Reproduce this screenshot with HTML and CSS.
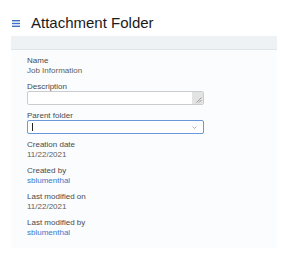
FILE: index.html
```html
<!DOCTYPE html>
<html>
<head>
<meta charset="utf-8">
<link rel="stylesheet" href="styles.css">
</head>
<body>
<header class="header">
  <svg class="menu" width="8" height="7" viewBox="0 0 8 7"><rect x="0" y="0" width="8" height="1.4" fill="#3d73c6"/><rect x="0" y="2.8" width="8" height="1.4" fill="#3d73c6"/><rect x="0" y="5.6" width="8" height="1.4" fill="#3d73c6"/></svg>
  <h1 class="title">Attachment Folder</h1>
</header>
<section class="panel">
  <div class="band"></div>
  <div class="fields">
    <div class="field">
      <div class="label">Name</div>
      <div class="value">Job Information</div>
    </div>
    <div class="field">
      <div class="label">Description</div>
      <div class="textarea"><div class="grip"><svg width="7" height="7" viewBox="0 0 7 7"><path d="M6.5 1.5 L1.5 6.5 M6.5 4 L4 6.5" stroke="#8a8a8a" stroke-width="0.8" fill="none"/></svg></div></div>
    </div>
    <div class="field">
      <div class="label">Parent folder</div>
      <div class="select"><span class="caret"></span><svg class="chev" width="5" height="3" viewBox="0 0 5 3"><path d="M0.5 0.5 L2.5 2.5 L4.5 0.5" stroke="#9a9a9a" stroke-width="0.8" fill="none"/></svg></div>
    </div>
    <div class="field">
      <div class="label">Creation date</div>
      <div class="value">11/22/2021</div>
    </div>
    <div class="field">
      <div class="label">Created by</div>
      <div class="value link">sblumenthal</div>
    </div>
    <div class="field">
      <div class="label">Last modified on</div>
      <div class="value">11/22/2021</div>
    </div>
    <div class="field">
      <div class="label">Last modified by</div>
      <div class="value link">sblumenthal</div>
    </div>
  </div>
</section>
</body>
</html>
```
FILE: styles.css
```css
html, body {
  margin: 0;
  padding: 0;
  background: #ffffff;
  font-family: "Liberation Sans", Arial, sans-serif;
}
.header {
  display: flex;
  align-items: flex-start;
  height: 36px;
  padding: 13px 0 0 12px;
  box-sizing: border-box;
}
.menu {
  margin-top: 7px;
  flex: none;
}
.title {
  margin: 0 0 0 11px;
  font-size: 15px;
  font-weight: normal;
  line-height: 20px;
  color: #1a1a1a;
}
.panel {
  margin: 0 13px 0 11px;
  background: #fbfcfd;
  padding-bottom: 10px;
}
.band {
  height: 13px;
  background: #eff2f4;
  border-bottom: 1px solid #dfe4e8;
}
.fields {
  display: flex;
  flex-direction: column;
  gap: 6px;
  padding: 6px 0 0 16px;
}
.field {
  display: flex;
  flex-direction: column;
}
.label {
  font-size: 8px;
  line-height: 10px;
  color: #4a4a4a;
}
.value {
  font-size: 8px;
  line-height: 10px;
  color: #5e5e5e;
}
.link {
  color: #3a78c9;
}
.textarea {
  margin-top: -1px;
  width: 177px;
  height: 14px;
  box-sizing: border-box;
  border: 1px solid #c9cdd1;
  border-radius: 2px;
  background: #ffffff;
  display: flex;
  justify-content: flex-end;
  overflow: hidden;
}
.grip {
  width: 11px;
  background: #e3e3e3;
  display: flex;
  align-items: flex-end;
  justify-content: flex-end;
}
.grip svg {
  display: block;
  margin: 0 1px 1px 0;
}
.select {
  margin-top: -1px;
  width: 177px;
  height: 14px;
  box-sizing: border-box;
  border: 1px solid #6a98da;
  border-radius: 2px;
  background: #ffffff;
  display: flex;
  align-items: center;
  justify-content: space-between;
  padding: 0 6px 0 4px;
}
.caret {
  width: 1px;
  height: 8px;
  background: #222222;
}
.chev {
  display: block;
}
```
